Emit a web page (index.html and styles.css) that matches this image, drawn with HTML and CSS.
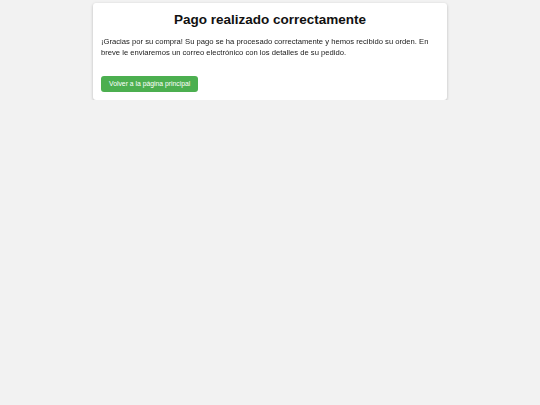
FILE: index.html
```html
<!DOCTYPE html>
<html lang="es">
<head>
<meta charset="utf-8">
<link rel="stylesheet" href="styles.css">
</head>
<body>
<div class="card">
  <h1 class="title">Pago realizado correctamente</h1>
  <p class="text">¡Gracias por su compra! Su pago se ha procesado correctamente y hemos recibido su orden. En breve le enviaremos un correo electrónico con los detalles de su pedido.</p>
  <a class="btn" href="#">Volver a la página principal</a>
</div>
</body>
</html>
```
FILE: styles.css
```css
html, body { margin: 0; padding: 0; }
body {
  background: #f2f2f2;
  font-family: "Liberation Sans", Arial, sans-serif;
  color: #222;
}
.card {
  width: 338px;
  margin: 3px auto 0;
  background: #fff;
  padding: 9px 8px 8px;
  border-radius: 3px;
  box-shadow: 0 1px 3px rgba(0,0,0,0.25);
}
.title {
  margin: 0;
  font-size: 13.5px;
  font-weight: bold;
  text-align: center;
  color: #111;
  line-height: 16px;
}
.text {
  margin: 8px 0 14px;
  font-size: 7.65px;
  line-height: 11px;
  color: #1a1a1a;
  -webkit-font-smoothing: antialiased;
  will-change: transform;
}
.btn {
  display: inline-block;
  background: #4caf50;
  color: #fff;
  font-size: 6.8px;
  line-height: 16px;
  padding: 0 8px;
  border-radius: 3px;
  text-decoration: none;
}
```
